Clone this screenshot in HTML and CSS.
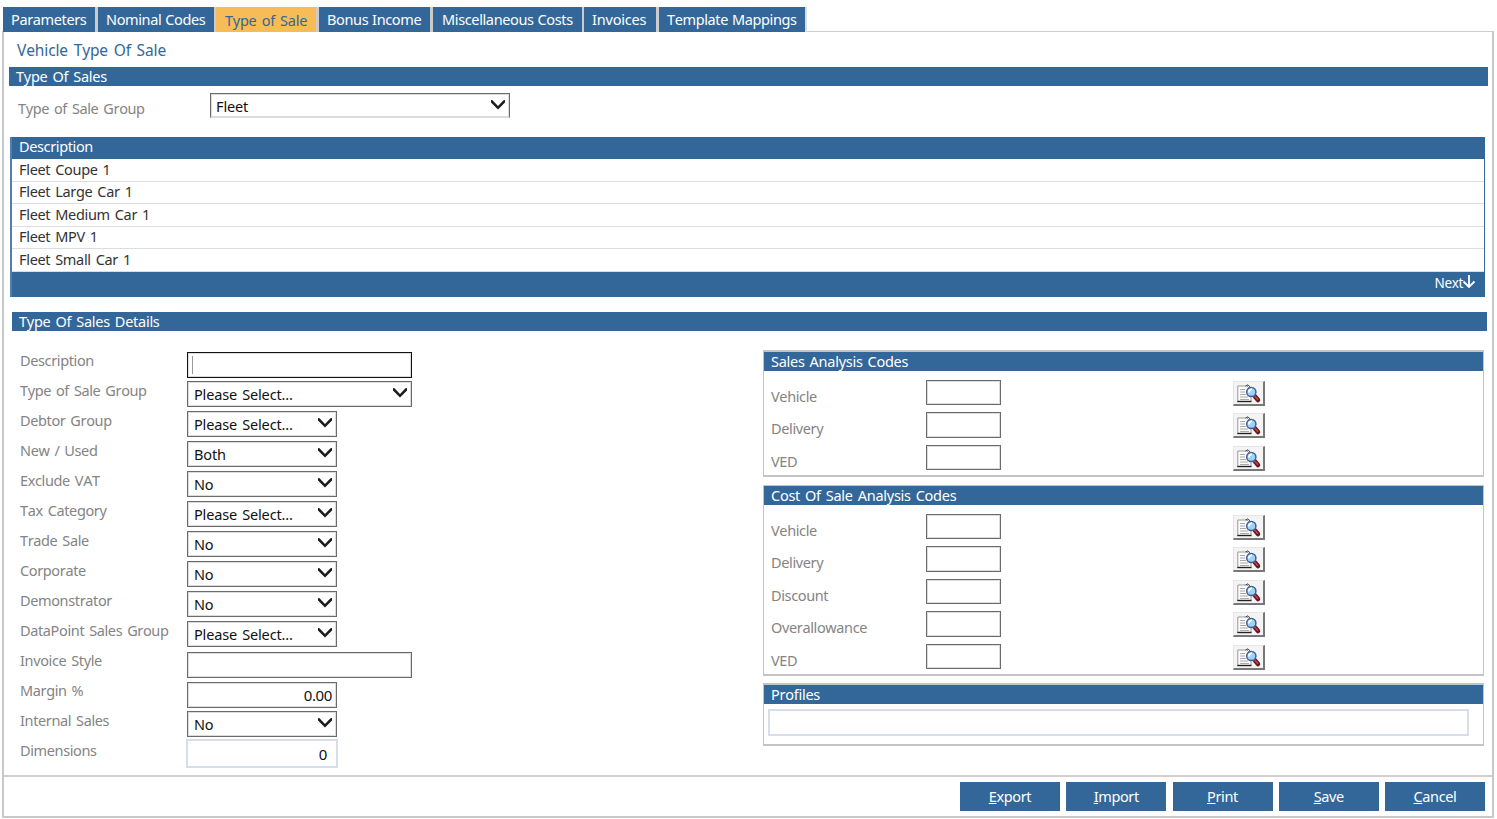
FILE: index.html
```
<!DOCTYPE html>
<html lang="en">
<head>
<meta charset="utf-8">
<title>Vehicle Type Of Sale</title>
<link rel="stylesheet" href="styles.css">
</head>
<body>
<svg class="defs" width="0" height="0" aria-hidden="true">
  <symbol id="chev" viewBox="0 0 14 10"><path d="M0 0 1.500 .2 7 5.900 12.500 .2 14 0V2.500L7 9.600 0 2.500z" fill="#1c1c1c"/></symbol>
  <symbol id="lookup" viewBox="0 0 25 20">
    <path d="M.8 2H10L14 6V17.500H.8z" fill="#fdfdfd" stroke="#999" stroke-width="1"/>
    <path d="M.3 17.500H14.500" stroke="#222" stroke-width="1.400"/>
    <path d="M8.500 2 11 .8 13 3" fill="none" stroke="#444"/>
    <path d="M3 5.500H8M3 8H8M3 10.500H9M3 13H11M3 15.500H12" stroke="#aaa" stroke-width="1"/>
    <path d="M18 12.500 21 16" stroke="#6e1420" stroke-width="4.500" stroke-linecap="round"/>
    <path d="M18 12.500 20.500 15.200" stroke="#b8404a" stroke-width="1.800" stroke-linecap="round"/>
    <circle cx="14.300" cy="8" r="4.600" fill="#9fd2f4" stroke="#3f5f9c" stroke-width="1.500"/>
    <path d="M11.700 8.500Q12 5.500 15 5.200" fill="none" stroke="#fff" stroke-width="1.800"/>
  </symbol>
</svg>
<div class="tabs">
  <div class="tab t1">Parameters</div>
  <div class="tab t2">Nominal Codes</div>
  <div class="tab t3 active">Type of Sale</div>
  <div class="tab t4">Bonus Income</div>
  <div class="tab t5">Miscellaneous Costs</div>
  <div class="tab t6">Invoices</div>
  <div class="tab t7">Template Mappings</div>
</div>
<main class="page">
  <section class="content">
    <h1 class="title">Vehicle Type Of Sale</h1>
    <h2 class="bar bar-top">Type Of Sales</h2>
    <div class="group-row">
      <span class="label">Type of Sale Group</span>
      <div class="select group-select"><span>Fleet</span><svg class="chev"><use href="#chev"/></svg></div>
    </div>
    <div class="list">
      <div class="list-head">Description</div>
      <div class="list-row odd">Fleet Coupe 1</div>
      <div class="list-row">Fleet Large Car 1</div>
      <div class="list-row odd">Fleet Medium Car 1</div>
      <div class="list-row">Fleet MPV 1</div>
      <div class="list-row odd">Fleet Small Car 1</div>
      <div class="list-foot"><span>Next</span><svg class="down" viewBox="0 0 14 14"><path d="M7 0V12M1.500 6.500 7 12 12.500 6.500" fill="none" stroke="#fff" stroke-width="1.800"/></svg></div>
    </div>
    <h2 class="bar bar-details">Type Of Sales Details</h2>
    <div class="details">
      <div class="form">
        <div class="field"><span class="label">Description</span><div class="input wide focus"><i class="caret"></i></div></div>
        <div class="field"><span class="label">Type of Sale Group</span><div class="select wide"><span>Please Select...</span><svg class="chev"><use href="#chev"/></svg></div></div>
        <div class="field"><span class="label">Debtor Group</span><div class="select"><span>Please Select...</span><svg class="chev"><use href="#chev"/></svg></div></div>
        <div class="field"><span class="label">New / Used</span><div class="select"><span>Both</span><svg class="chev"><use href="#chev"/></svg></div></div>
        <div class="field"><span class="label">Exclude VAT</span><div class="select"><span>No</span><svg class="chev"><use href="#chev"/></svg></div></div>
        <div class="field"><span class="label">Tax Category</span><div class="select"><span>Please Select...</span><svg class="chev"><use href="#chev"/></svg></div></div>
        <div class="field"><span class="label">Trade Sale</span><div class="select"><span>No</span><svg class="chev"><use href="#chev"/></svg></div></div>
        <div class="field"><span class="label">Corporate</span><div class="select"><span>No</span><svg class="chev"><use href="#chev"/></svg></div></div>
        <div class="field"><span class="label">Demonstrator</span><div class="select"><span>No</span><svg class="chev"><use href="#chev"/></svg></div></div>
        <div class="field"><span class="label">DataPoint Sales Group</span><div class="select"><span>Please Select...</span><svg class="chev"><use href="#chev"/></svg></div></div>
        <div class="field"><span class="label">Invoice Style</span><div class="input wide"></div></div>
        <div class="field"><span class="label">Margin %</span><div class="input number">0.00</div></div>
        <div class="field"><span class="label">Internal Sales</span><div class="select"><span>No</span><svg class="chev"><use href="#chev"/></svg></div></div>
        <div class="field"><span class="label">Dimensions</span><div class="input number soft">0</div></div>
      </div>
      <div class="panels">
        <section class="panel sales">
          <h3 class="bar panel-bar">Sales Analysis Codes</h3>
          <div class="code"><span class="label">Vehicle</span><div class="code-input"></div><div class="lookup"><svg><use href="#lookup"/></svg></div></div>
          <div class="code"><span class="label">Delivery</span><div class="code-input"></div><div class="lookup"><svg><use href="#lookup"/></svg></div></div>
          <div class="code"><span class="label">VED</span><div class="code-input"></div><div class="lookup"><svg><use href="#lookup"/></svg></div></div>
        </section>
        <section class="panel cost">
          <h3 class="bar panel-bar">Cost Of Sale Analysis Codes</h3>
          <div class="code"><span class="label">Vehicle</span><div class="code-input"></div><div class="lookup"><svg><use href="#lookup"/></svg></div></div>
          <div class="code"><span class="label">Delivery</span><div class="code-input"></div><div class="lookup"><svg><use href="#lookup"/></svg></div></div>
          <div class="code"><span class="label">Discount</span><div class="code-input"></div><div class="lookup"><svg><use href="#lookup"/></svg></div></div>
          <div class="code"><span class="label">Overallowance</span><div class="code-input"></div><div class="lookup"><svg><use href="#lookup"/></svg></div></div>
          <div class="code"><span class="label">VED</span><div class="code-input"></div><div class="lookup"><svg><use href="#lookup"/></svg></div></div>
        </section>
        <section class="panel profiles">
          <h3 class="bar panel-bar">Profiles</h3>
          <div class="profile-input"></div>
        </section>
      </div>
    </div>
  </section>
  <footer class="actions">
    <div class="btn"><span><u>E</u>xport</span></div>
    <div class="btn"><span><u>I</u>mport</span></div>
    <div class="btn"><span><u>P</u>rint</span></div>
    <div class="btn"><span><u>S</u>ave</span></div>
    <div class="btn"><span><u>C</u>ancel</span></div>
  </footer>
</main>
</body>
</html>
```
FILE: styles.css
```
* { box-sizing: border-box; }
body {
  margin: 0;
  height: 819px;
  overflow: hidden;
  background: #fff;
  color: #333;
  font-family: "Noto Sans", "Open Sans", sans-serif;
  font-size: 14.5px;
  font-kerning: none;
  letter-spacing: -0.37px;
  word-spacing: 1.5px;
  line-height: 20px;
  white-space: nowrap;
}
.defs { position: absolute; }
h1, h2, h3 { margin: 0; font-size: inherit; font-weight: 400; }

.tabs { display: flex; height: 31px; padding: 7px 0 0 3px; }
.tab {
  height: 25px;
  padding-left: 8px;
  background: #336799;
  color: #fff;
  line-height: 25px;
  border-right: 3px solid #ccc;
  word-spacing: 0.5px;
  position: relative;
  z-index: 1;
}
.t1 { width: 95px; }
.t2 { width: 118px; border-right-width: 2px; }
.t3 { width: 103px; padding-left: 9px; letter-spacing: -0.25px; word-spacing: 1.6px; }
.t4 { width: 114px; }
.t5 { width: 151px; padding-left: 9px; border-right-width: 2px; }
.t6 { width: 75px; letter-spacing: -0.2px; }
.t7 { width: 148px; border-right: 2px solid #ddd; }
.tab.active { background: #f7bc55; color: #336799; line-height: 26px; }

.page {
  width: 1492px;
  height: 787px;
  margin-left: 2px;
  border: 2px solid #c8c8c8;
  border-top: 1px solid #ccc;
}
.content { height: 743px; padding-left: 5px; }
.title { padding: 8px 0 0 8px; height: 35px; color: #336799; font-size: 15.5px; letter-spacing: -0.12px; word-spacing: 1.8px; }
.bar { height: 19px; background: #336799; color: #fff; line-height: 18px; padding-left: 7px; letter-spacing: -0.27px; }
.bar-top { width: 1479px; }
.label { color: #848484; }
.group-row { display: grid; grid-template-columns: 192px 300px; height: 51px; padding: 7px 0 0 9px; }
.group-row .label { padding-top: 5px; }

.select, .input {
  width: 150px;
  height: 26px;
  background: #fff;
  border: 1px solid #6a6a6a;
  box-shadow: inset 0 0 0 1px #dcdcdc;
  color: #111;
}
.select { display: flex; justify-content: space-between; align-items: center; padding: 0 4px 0 6px; letter-spacing: -0.15px; }
.chev { width: 14px; height: 10px; margin-top: -2px; }
.select.wide, .input.wide { width: 225px; }
.group-select { width: 300px; height: 25px; border-bottom-color: #dcdcdc; padding-left: 5px; }

.list {
  width: 1475px;
  height: 160px;
  margin-left: 1px;
  border: solid #336799;
  border-width: 0 1px;
  border-left: 2px solid #4f7fb0;
}
.list-head { height: 22px; padding-left: 7px; background: #336799; color: #fff; line-height: 18px; }
.list-row { height: 22px; padding-left: 7px; border-bottom: 1px solid #ddd; line-height: 19px; letter-spacing: -0.32px; }
.list-row.odd { height: 23px; line-height: 21px; }
.list-foot {
  display: flex;
  justify-content: flex-end;
  height: 25px;
  padding-right: 8px;
  background: #336799;
  color: #fff;
  font-size: 13.5px;
  line-height: 22px;
}
.down { width: 14px; height: 14px; margin: 3px 0 0 -1px; }
.bar-details { width: 1475px; margin: 15px 0 0 3px; }

.details { display: grid; grid-template-columns: 754px 721px; padding-top: 19px; }
.form { padding-left: 11px; }
.field { display: grid; grid-template-columns: 167px 226px; height: 30px; }
.field .select { margin-top: 1px; }
.field .input { margin-top: 2px; }
.input.focus { border-color: #111; }
.caret { display: block; width: 1px; height: 18px; margin: 3px 0 0 4px; background: #999; }
.field .number { text-align: right; padding: 2px 4px 0 0; font-size: 15px; }
.field .input.soft { width: 152px; height: 29px; margin: -1px 0 0 -1px; border: 2px solid #d6deea; box-shadow: none; padding: 3px 9px 0 0; }

.panel { border: 1px solid #c4c4c4; border-top-width: 2px; border-bottom-width: 2px; }
.panel .panel-bar { margin-bottom: 9px; }
.sales { height: 127px; margin-bottom: 8px; }
.cost { height: 191px; margin-bottom: 7px; border-top-width: 1px; }
.profiles { height: 63px; }
.code { display: grid; grid-template-columns: 155px 307px 32px; height: 32px; padding-left: 7px; }
.code:nth-of-type(even) { height: 33px; }
.code .label { padding-top: 6px; }
.code-input { width: 75px; height: 25px; border: 1px solid #6a6a6a; box-shadow: inset 0 0 0 1px #dcdcdc; }
.code:nth-of-type(even) .code-input { height: 26px; }
.lookup {
  width: 32px;
  height: 25px;
  margin-top: 1px;
  padding: 2px 0 0 3px;
  background: #f4f4f4;
  border: 1px solid #e6e6e6;
  border-right: 2px solid #777;
  border-bottom: 2px solid #777;
}
.lookup svg { display: block; width: 25px; height: 20px; }
.panel.profiles .panel-bar { margin-bottom: 5px; }
.profile-input { width: 701px; height: 27px; margin-left: 4px; border: 2px solid #d6deea; }

.actions { display: flex; justify-content: flex-end; gap: 6.25px; height: 41px; padding: 5px 7px 0 0; border-top: 2px solid #d0d0d0; }
.btn { width: 100px; height: 29px; background: #336799; color: #fff; text-align: center; line-height: 29px; }
.btn u { text-underline-offset: 1px; }
```
